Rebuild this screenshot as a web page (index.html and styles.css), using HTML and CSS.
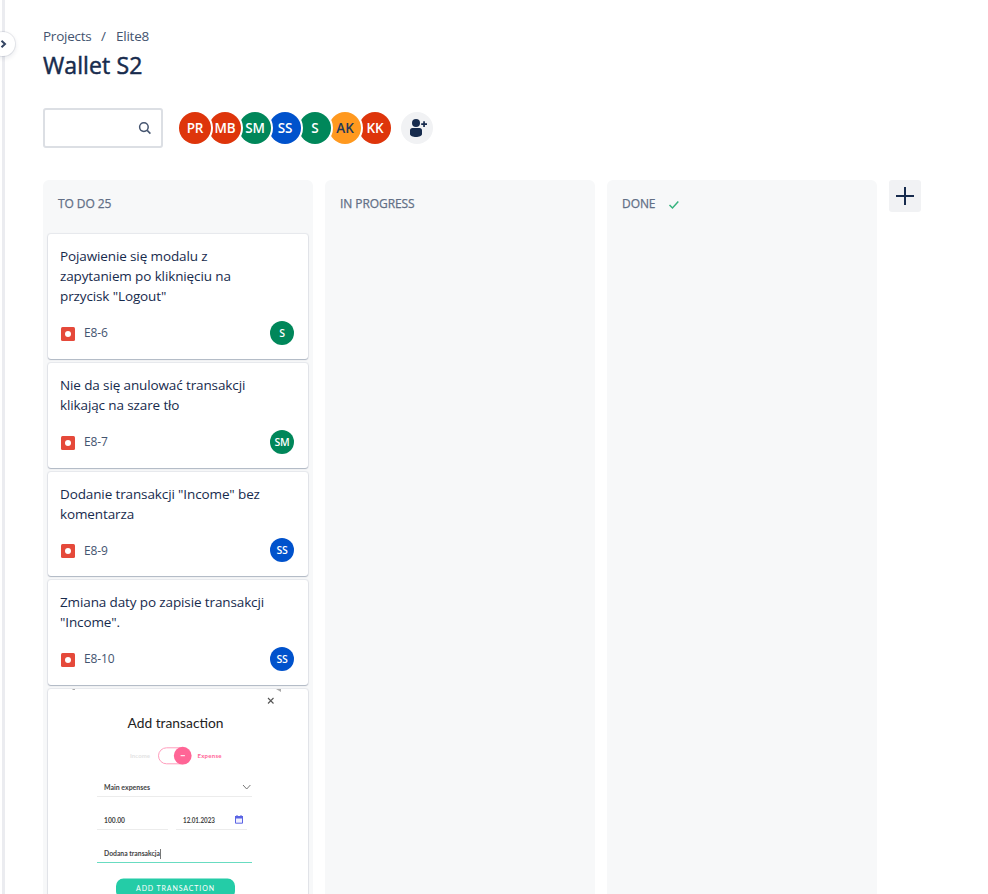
FILE: index.html
```html
<!DOCTYPE html>
<html lang="pl">
<head>
<meta charset="utf-8">
<title>Wallet S2</title>
<link rel="stylesheet" href="styles.css">
</head>
<body>
<div class="rail"><button class="expand" aria-label="Expand"><svg width="8" height="10" viewBox="0 0 8 10"><path d="M1.5 1.7 5 5 1.5 8.3" fill="none" stroke="#344563" stroke-width="2"/></svg></button></div>
<main class="page">
  <nav class="crumbs"><span class="c1">Projects</span><span class="slash">/</span><span class="c2">Elite8</span></nav>
  <h1>Wallet S2</h1>
  <div class="toolbar">
    <div class="search"><svg width="14" height="14" viewBox="0 0 14 14" fill="none" stroke="#44546f" stroke-width="1.5"><circle cx="5.900" cy="6.100" r="4.300"/><path d="m9.200 9.400 3.200 3.200"/></svg></div>
    <div class="people">
      <span class="avatar red">PR</span><span class="avatar red">MB</span><span class="avatar green">SM</span><span class="avatar blue">SS</span><span class="avatar green">S</span><span class="avatar amber">AK</span><span class="avatar red">KK</span>
    </div>
    <button class="invite" aria-label="Add people"><svg width="32" height="32" viewBox="0 0 32 32" fill="#172b4d"><circle cx="15" cy="11" r="4"/><path d="M9 18.500a2.500 2.500 0 0 1 2.500-2.500h7a2.500 2.500 0 0 1 2.500 2.500V22c0 2-3 3-6 3s-6-1-6-3zM22.200 9.300h1.700v1.900H26v1.700h-2.100V15h-1.700v-2.100h-2v-1.700h2z"/></svg></button>
  </div>
  <div class="board">
    <section class="column">
      <h2 class="h-todo">TO DO 25</h2>
      <div class="cards">
        <article class="card tall">
          <p>Pojawienie się modalu z<br>zapytaniem po kliknięciu na<br>przycisk "Logout"</p>
          <footer><svg class="bug" viewBox="0 0 14 14"><rect width="14" height="14" rx="1.5" fill="#e5493a"/><circle cx="7" cy="7" r="3" fill="#fff"/></svg><span class="key">E8-6</span><span class="mini green">S</span></footer>
        </article>
        <article class="card">
          <p>Nie da się anulować transakcji<br>klikając na szare tło</p>
          <footer><svg class="bug" viewBox="0 0 14 14"><rect width="14" height="14" rx="1.5" fill="#e5493a"/><circle cx="7" cy="7" r="3" fill="#fff"/></svg><span class="key">E8-7</span><span class="mini green">SM</span></footer>
        </article>
        <article class="card short">
          <p>Dodanie transakcji "Income" bez<br>komentarza</p>
          <footer><svg class="bug" viewBox="0 0 14 14"><rect width="14" height="14" rx="1.5" fill="#e5493a"/><circle cx="7" cy="7" r="3" fill="#fff"/></svg><span class="key">E8-9</span><span class="mini blue">SS</span></footer>
        </article>
        <article class="card">
          <p>Zmiana daty po zapisie transakcji<br>"Income".</p>
          <footer><svg class="bug" viewBox="0 0 14 14"><rect width="14" height="14" rx="1.5" fill="#e5493a"/><circle cx="7" cy="7" r="3" fill="#fff"/></svg><span class="key">E8-10</span><span class="mini blue">SS</span></footer>
        </article>
        <article class="card cover">
          <svg width="260" height="210" viewBox="0 0 260 210">
            <path d="M24 0h3v1h-2zM228 0h5v3z" fill="#aaa"/>
            <path d="m220 9 5.500 5.500m0-5.500-5.500 5.500" stroke="#555" stroke-width="1.100"/>
            <text x="79.500" y="38.500" class="dlg-title" textLength="96" lengthAdjust="spacingAndGlyphs">Add transaction</text>
            <text x="82" y="69" class="dlg-small" fill="#e3e3e3" textLength="20">Income</text>
            <rect x="110.500" y="58.800" width="32" height="16" rx="8" fill="#fff" stroke="#ff9dbd"/>
            <circle cx="134.700" cy="66.700" r="8.900" fill="#ff6596"/>
            <path d="M132.600 66.700h4.300" stroke="#fff" stroke-width="1"/>
            <text x="149.500" y="69" class="dlg-small" fill="#ff6596" textLength="24">Expense</text>
            <text x="56" y="101.300" class="dlg-field" textLength="46" lengthAdjust="spacingAndGlyphs">Main expenses</text>
            <path d="m195 96 3.700 4 3.700-4" fill="none" stroke="#777" stroke-width="1"/>
            <path d="M49 107.500h155M49 140.500h71M128 140.500h71" stroke="#ececec"/>
            <text x="56" y="134.300" class="dlg-field" textLength="21" lengthAdjust="spacingAndGlyphs">100.00</text>
            <text x="135" y="134.300" class="dlg-field" textLength="32" lengthAdjust="spacingAndGlyphs">12.01.2023</text>
            <path d="M187.500 128h7v6.200h-7z" fill="#f1f1ff" stroke="#5a64e4"/><path d="M187 127h8v2.500h-8zM188.500 126h1v2h-1zM192.500 126h1v2h-1z" fill="#5a64e4"/>
            <text x="56" y="167.300" class="dlg-field" textLength="56" lengthAdjust="spacingAndGlyphs">Dodana transakcja</text>
            <path d="M112.500 160v10" stroke="#555" stroke-width=".8"/>
            <path d="M49 173.500h155" stroke="#68dcc1"/>
            <rect x="68" y="189.500" width="119" height="20" rx="7.500" fill="#24cca7"/>
            <text x="88" y="201.500" class="dlg-btn" textLength="78">ADD TRANSACTION</text>
          </svg>
        </article>
      </div>
    </section>
    <section class="column"><h2 class="h-prog">IN PROGRESS</h2></section>
    <section class="column"><h2><span class="h-done">DONE</span><svg class="check" width="12" height="10" viewBox="0 0 12 10"><path d="m1.500 5 3 3L10.300 1.500" fill="none" stroke="#36b37e" stroke-width="1.500"/></svg></h2></section>
    <button class="add" aria-label="Add column"><svg width="32" height="32" viewBox="0 0 32 32"><path d="M16 7v18M7 16h18" stroke="#172b4d" stroke-width="2"/></svg></button>
  </div>
</main>
</body>
</html>
```
FILE: styles.css
```css
* { box-sizing: border-box; }
body { margin: 0; height: 894px; overflow: hidden; display: flex; background: #fff; color: #172b4d; font-family: "Open Sans", "Noto Sans", sans-serif; font-size: 14px; }
button { border: 0; padding: 0; }
svg { display: block; flex: none; }
.rail { position: relative; flex: none; width: 5px; height: 894px; border-left: 2px solid #fff; background: #ebecf0; }
.expand { position: absolute; left: -11px; top: 32px; width: 24px; height: 24px; border-radius: 50%; background: #fff; box-shadow: 0 0 0 1px rgba(9,30,66,.08), 0 2px 4px 1px rgba(9,30,66,.08); display: flex; align-items: center; padding-left: 9px; }
.page { padding: 26px 0 0 38px; flex: none; width: 983px; }
.crumbs { display: flex; height: 20px; line-height: 20px; font-size: 13.5px; color: #44546f; }
.crumbs span { flex: none; white-space: nowrap; }
.c1 { width: 58px; letter-spacing: -.25px; }
.slash { width: 15px; }
.c2 { letter-spacing: -.25px; }
h1 { margin: 5px 0 0; height: 28px; line-height: 28px; font-size: 23px; font-weight: 500; letter-spacing: .1px; -webkit-text-stroke: .5px #172b4d; }
.toolbar { display: flex; align-items: center; height: 40px; margin-top: 29px; }
.search { width: 120px; height: 40px; border: 2px solid #dcdfe4; border-radius: 3px; padding: 11px 9px; display: flex; justify-content: flex-end; }
.people { display: flex; margin-left: 16px; isolation: isolate; }
.avatar { position: relative; flex: none; width: 32px; height: 32px; margin-right: -2px; border-radius: 50%; box-shadow: 0 0 0 2px #fff; color: #fff; font-size: 13.5px; font-weight: 600; line-height: 32px; text-align: center; letter-spacing: -.1px; }
.avatar:nth-child(1) { z-index: 7; }
.avatar:nth-child(2) { z-index: 6; }
.avatar:nth-child(3) { z-index: 5; }
.avatar:nth-child(4) { z-index: 4; }
.avatar:nth-child(5) { z-index: 3; }
.avatar:nth-child(6) { z-index: 2; }
.red { background: #de350b; }
.green { background: #00875a; }
.blue { background: #0052cc; }
.amber { background: #ff991f; color: #253858; }
.invite { width: 32px; height: 32px; border-radius: 50%; margin-left: 12px; background: #f1f2f4; }
.board { display: flex; gap: 12px; margin-top: 32px; }
.column { width: 270px; height: 720px; border-radius: 6px; background: #f7f8f9; flex: none; }
h2 { margin: 0; height: 53px; padding: 14px 15px 0; line-height: 20px; font-size: 12px; font-weight: 500; color: #626f86; display: flex; white-space: nowrap; letter-spacing: -.08px; -webkit-text-stroke: .25px #626f86; }
.check { margin: 6px 0 0 13px; }
.add { width: 32px; height: 32px; border-radius: 3px; background: #f1f2f4; }
.cards { display: flex; flex-direction: column; gap: 4px; padding: 1px 5px 0; }
.card { width: 260px; height: 105px; flex: none; padding: 12px; background: #fff; border-radius: 3px; box-shadow: 0 1px 1px rgba(9,30,66,.25), 0 0 1px 1px rgba(9,30,66,.07); }
.tall { height: 125px; }
.short { height: 104px; }
.card p { margin: 0; line-height: 20px; font-size: 13.5px; white-space: nowrap; letter-spacing: -.12px; }
.card footer { display: flex; align-items: center; height: 24px; margin-top: 15px; padding: 0 2px 0 1px; }
.short footer { margin-top: 14px; }
.bug { width: 14px; height: 14px; margin-top: 2px; }
.key { margin: -2px 0 0 9px; font-size: 12px; letter-spacing: -.1px; color: #44546f; }
.short .key { margin-top: 0; }
.mini { width: 24px; height: 24px; margin-left: auto; border-radius: 50%; color: #fff; font-size: 10.5px; line-height: 24px; font-weight: 600; text-align: center; letter-spacing: -.2px; }
.cover { padding: 0; height: 240px; }
.dlg-title { font: 13px Lato, sans-serif; fill: #222; }
.dlg-small { font: bold 6px Lato, sans-serif; }
.dlg-field { font: bold 7px Lato, sans-serif; fill: #444; }
.dlg-btn { font: 7px Lato, sans-serif; fill: #fff; }
```
